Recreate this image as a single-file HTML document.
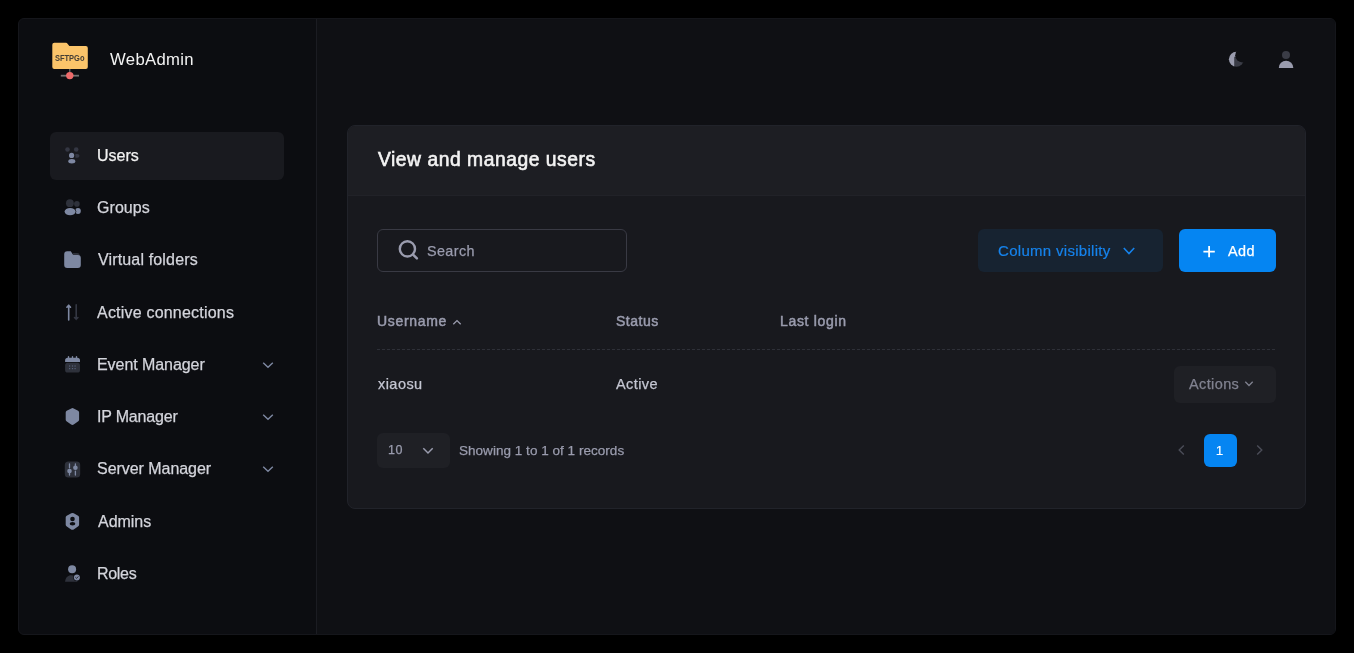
<!DOCTYPE html>
<html>
<head>
<meta charset="utf-8">
<style>
*{box-sizing:border-box;margin:0;padding:0}
html,body{width:1354px;height:653px;background:#000;overflow:hidden;font-family:"Liberation Sans",sans-serif;-webkit-font-smoothing:antialiased}
.a{will-change:transform}
.m{-webkit-text-stroke-width:0.25px}
.sb{-webkit-text-stroke-width:0.5px}
.a{position:absolute;white-space:nowrap;line-height:1}
.frame{position:absolute;left:18px;top:18px;width:1318px;height:617px;background:#0C0D11;border:1px solid #15161b;border-radius:6px;overflow:hidden}
.main{position:absolute;left:316px;top:19px;width:1019px;height:615px;background:#0F1014;border-left:1px solid #1B1C22;border-radius:0 5px 5px 0}
.menu-active{position:absolute;left:50px;top:132px;width:234px;height:48px;background:#191A1F;border-radius:6px}
.mi{font-size:16px;color:#D4D5DC;left:98px;-webkit-text-stroke:0.25px #D4D5DC}
.chev{position:absolute;left:262px;width:12px;height:8px}
.card{position:absolute;left:347px;top:125px;width:959px;height:384px;background:#18191E;border:1px solid #21232A;border-radius:8px;overflow:hidden}
.card-h{position:absolute;left:0;top:0;right:0;height:70px;background:#1D1E23;border-bottom:1px solid #212228}
svg{position:absolute;overflow:visible;will-change:transform}
</style>
</head>
<body>
<div class="frame"></div>
<div class="main"></div>

<!-- logo -->
<svg style="left:50px;top:40px" width="40" height="40" viewBox="0 0 40 40">
  <path d="M4.3 2.7 h11.8 a1.2 1.2 0 0 1 1 .5 l2.3 2.8 h16.4 a2 2 0 0 1 2 2 v19 a2 2 0 0 1 -2 2 h-31.5 a2 2 0 0 1 -2 -2 v-22.3 a2 2 0 0 1 2 -2z" fill="#FBC46A"/>
  <text x="19.7" y="21.1" font-family="Liberation Sans" font-weight="bold" font-size="8.9" fill="#463F35" text-anchor="middle" textLength="29.6" lengthAdjust="spacingAndGlyphs">SFTPGo</text>
  <rect x="19.2" y="29" width="1.2" height="4" fill="#707070"/>
  <rect x="10.8" y="34.8" width="18.2" height="1.8" fill="#707070"/>
  <circle cx="19.8" cy="35.6" r="3.7" fill="#EE6B6B"/>
</svg>
<div class="a" style="left:110px;top:51.6px;font-size:16.7px;letter-spacing:0.33px;color:#F3F3F3">WebAdmin</div>

<!-- menu -->
<div class="menu-active"></div>

<svg style="left:60px;top:144px" width="24" height="24" viewBox="0 0 24 24">
  <circle cx="7.5" cy="5.5" r="2.3" fill="#343743"/>
  <circle cx="16.2" cy="5.5" r="2.3" fill="#343743"/>
  <path d="M15.4 9.9 h1.9 a2.2 1.9 0 0 1 0 3.8 h-1.9z" fill="#343743"/>
  <circle cx="11.6" cy="11.4" r="2.6" fill="#7E88A2"/>
  <ellipse cx="11.8" cy="17.3" rx="3.5" ry="2.2" fill="#7E88A2"/>
</svg>
<div class="a mi" style="top:147.68px;left:97px;letter-spacing:-0.026px;color:#F3F3F3;-webkit-text-stroke:0.25px #F3F3F3">Users</div>

<svg style="left:60px;top:196px" width="24" height="24" viewBox="0 0 24 24">
  <circle cx="9.9" cy="7.2" r="3.9" fill="#2E313B"/>
  <circle cx="16.9" cy="7.9" r="2.8" fill="#2E313B"/>
  <ellipse cx="18" cy="14.9" rx="2.8" ry="3" fill="#7E88A2"/>
  <ellipse cx="10.1" cy="15.6" rx="6.2" ry="4.3" fill="#0C0D11"/>
  <ellipse cx="10.1" cy="15.6" rx="5.5" ry="3.7" fill="#7E88A2"/>
</svg>
<div class="a mi" style="top:199.58px;left:96.7px;letter-spacing:0.052px">Groups</div>

<svg style="left:60px;top:248px" width="24" height="24" viewBox="0 0 24 24">
  <path d="M13 5 h4.5 a2 2 0 0 1 2 2 v1 h-6.5z" fill="#2E313B"/>
  <path d="M7.2 3.3 h3.6 l2.4 3.6 h4.6 a3 3 0 0 1 3 3 v7 a3 3 0 0 1 -3 3 h-10.6 a3 3 0 0 1 -3 -3 v-10.6 a3 3 0 0 1 3 -3z" fill="#7E88A2"/>
</svg>
<div class="a mi" style="top:252.48px;letter-spacing:0.152px">Virtual folders</div>

<svg style="left:60px;top:300px" width="24" height="24" viewBox="0 0 24 24">
  <path d="M8.7 20 V5.3 M6.9 7.2 L8.7 5.2 L10.5 7.2" stroke="#7E88A2" stroke-width="1.6" fill="none" stroke-linecap="round" stroke-linejoin="round"/>
  <path d="M16.2 4.8 V19.2 M14.5 17.5 L16.2 19.3 L17.9 17.5" stroke="#343743" stroke-width="1.6" fill="none" stroke-linecap="round" stroke-linejoin="round"/>
</svg>
<div class="a mi" style="top:305.1px;left:97px;letter-spacing:0.205px">Active connections</div>

<svg style="left:60px;top:352px" width="24" height="24" viewBox="0 0 24 24">
  <rect x="5.1" y="10.8" width="14.9" height="9.8" rx="2.6" fill="#2E313B"/>
  <path d="M5.1 9.9 V8.6 a2.8 2.8 0 0 1 2.8 -2.8 h9.3 a2.8 2.8 0 0 1 2.8 2.8 V9.9z" fill="#7E88A2"/>
  <rect x="7.8" y="4" width="1.4" height="3" rx="0.7" fill="#7E88A2"/>
  <rect x="11.8" y="4" width="1.4" height="3" rx="0.7" fill="#7E88A2"/>
  <rect x="15.8" y="4" width="1.4" height="3" rx="0.7" fill="#7E88A2"/>
  <g fill="#56607a"><rect x="9" y="13.4" width="1.2" height="1.2"/><rect x="11.9" y="13.4" width="1.2" height="1.2"/><rect x="14.5" y="13.4" width="1.2" height="1.2"/><rect x="9" y="16" width="1.2" height="1.2"/><rect x="11.9" y="16" width="1.2" height="1.2"/><rect x="14.5" y="16" width="1.2" height="1.2"/></g>
</svg>
<div class="a mi" style="top:357.0px;left:96.6px;letter-spacing:-0.063px">Event Manager</div>
<svg class="chev" style="top:361px" width="12" height="8" viewBox="0 0 12 8"><path d="M1.2 1.8 L6 6.2 L10.8 1.8" stroke="#7E88A2" stroke-width="1.4" fill="none"/></svg>

<svg style="left:60px;top:404px" width="24" height="24" viewBox="0 0 24 24">
  <path d="M11.3 4.4 a2.4 2.4 0 0 1 2.4 0 l4.4 2.4 a1.8 1.8 0 0 1 1 1.6 v7.4 a1.8 1.8 0 0 1 -0.8 1.5 l-4.6 3.2 a2.4 2.4 0 0 1 -2.6 0 l-4.6 -3.2 a1.8 1.8 0 0 1 -0.8 -1.5 v-7.4 a1.8 1.8 0 0 1 1 -1.6z" fill="#7E88A2"/>
</svg>
<div class="a mi" style="top:408.58px;left:96.6px;letter-spacing:-0.186px">IP Manager</div>
<svg class="chev" style="top:413px" width="12" height="8" viewBox="0 0 12 8"><path d="M1.2 1.8 L6 6.2 L10.8 1.8" stroke="#7E88A2" stroke-width="1.4" fill="none"/></svg>

<svg style="left:60px;top:457px" width="24" height="24" viewBox="0 0 24 24">
  <rect x="4.8" y="4.4" width="15.4" height="16.2" rx="3.6" fill="#2E313B"/>
  <g stroke="#7E88A2" stroke-width="1.3" stroke-linecap="round"><path d="M9.5 6.8 V10.8 M9.5 15.8 V18 M15.4 6.8 V8.8 M15.4 14.2 V18"/></g>
  <circle cx="9.5" cy="14" r="2.3" fill="#7E88A2"/>
  <circle cx="15.4" cy="10.7" r="2.3" fill="#7E88A2"/>
</svg>
<div class="a mi" style="top:461.1px;left:96.8px;letter-spacing:-0.046px">Server Manager</div>
<svg class="chev" style="top:465px" width="12" height="8" viewBox="0 0 12 8"><path d="M1.2 1.8 L6 6.2 L10.8 1.8" stroke="#7E88A2" stroke-width="1.4" fill="none"/></svg>

<svg style="left:60px;top:510px" width="24" height="24" viewBox="0 0 24 24">
  <path d="M11.3 3.3 a2.4 2.4 0 0 1 2.4 0 l4.4 2.4 a1.8 1.8 0 0 1 1 1.6 v7.4 a1.8 1.8 0 0 1 -0.8 1.5 l-4.6 3.2 a2.4 2.4 0 0 1 -2.6 0 l-4.6 -3.2 a1.8 1.8 0 0 1 -0.8 -1.5 v-7.4 a1.8 1.8 0 0 1 1 -1.6z" fill="#7E88A2"/>
  <circle cx="12.5" cy="9" r="2.3" fill="#0C0D11"/>
  <ellipse cx="12.5" cy="13.8" rx="2.8" ry="1.7" fill="#0C0D11"/>
</svg>
<div class="a mi" style="top:514.38px;letter-spacing:-0.034px">Admins</div>

<svg style="left:60px;top:562px" width="24" height="24" viewBox="0 0 24 24">
  <path d="M5.1 19.7 C5.3 15.5 8 13.2 11.2 13.2 C13.8 13.2 16 14.2 17.3 16 L17.3 19.7z" fill="#2E313B"/>
  <circle cx="12.1" cy="7.2" r="4" fill="#7E88A2"/>
  <circle cx="16.9" cy="15.4" r="3.6" fill="#0C0D11"/>
  <circle cx="16.9" cy="15.4" r="3" fill="#7E88A2"/>
  <path d="M15.4 15.3 L16.6 16.4 L18.4 14.4" stroke="#2E313B" stroke-width="1" fill="none"/>
</svg>
<div class="a mi" style="top:566.48px;left:96.8px;letter-spacing:-0.320px">Roles</div>

<!-- header icons -->
<svg style="left:1224px;top:47px" width="24" height="24" viewBox="0 0 24 24">
  <defs><mask id="moon"><circle cx="12.4" cy="12.2" r="7.5" fill="#fff"/><circle cx="18.4" cy="8.2" r="7.2" fill="#000"/></mask></defs>
  <g mask="url(#moon)"><rect x="0" y="0" width="24" height="24" fill="#3A3C46"/><path d="M0 0 H24 V9.8 H10.2 V24 H0z" fill="#9A9CAE"/></g>
</svg>
<svg style="left:1274px;top:47px" width="24" height="24" viewBox="0 0 24 24">
  <circle cx="12" cy="8.1" r="4" fill="#3A3C46"/>
  <path d="M4.8 21 A7.2 7.2 0 0 1 19.3 21z" fill="#9A9CAE"/>
</svg>

<!-- card -->
<div class="card"><div class="card-h"></div></div>
<div class="a" style="left:378px;top:150px;font-size:19.3px;letter-spacing:0.53px;color:#F3F3F3;-webkit-text-stroke:0.6px #F3F3F3">View and manage users</div>

<div class="a" style="left:377px;top:229px;width:250px;height:43px;border:1px solid #393A44;border-radius:6px"></div>
<svg style="left:396px;top:237px" width="24" height="24" viewBox="0 0 24 24">
  <circle cx="11.4" cy="11.9" r="7.6" stroke="#9A9CAE" stroke-width="2.4" fill="none"/>
  <path d="M17.3 17.8 L20.9 21.4" stroke="#9A9CAE" stroke-width="2.5" stroke-linecap="round"/>
</svg>
<div class="a m" style="left:427.4px;top:243.9px;font-size:14.4px;letter-spacing:0.38px;color:#9A9CAE">Search</div>

<div class="a" style="left:978px;top:229px;width:185px;height:43px;background:#172331;border-radius:6px"></div>
<div class="a" style="left:997.7px;top:243.0px;font-size:15px;letter-spacing:0.3px;color:#1683EC;-webkit-text-stroke-width:0.2px">Column visibility</div>
<svg style="left:1122px;top:246px" width="14" height="10" viewBox="0 0 14 10"><path d="M1.8 2 L7 7.6 L12.2 2" stroke="#1683EC" stroke-width="1.6" fill="none"/></svg>

<div class="a" style="left:1179px;top:229px;width:97px;height:43px;background:#0585F2;border-radius:6px"></div>
<svg style="left:1202px;top:244px" width="14" height="14" viewBox="0 0 14 14"><path d="M7.1 2 V13.2 M1.4 7.6 H12.8" stroke="#fff" stroke-width="1.8"/></svg>
<div class="a m" style="left:1228px;top:243.9px;font-size:14.4px;letter-spacing:0.5px;color:#FFFFFF">Add</div>

<!-- table -->
<div class="a sb" style="left:376.7px;top:314px;font-size:14px;letter-spacing:0.69px;color:#9A9CAE">Username</div>
<svg style="left:451px;top:317px" width="12" height="10" viewBox="0 0 12 10"><path d="M2.3 7.3 L6 3.6 L9.7 7.3" stroke="#9A9CAE" stroke-width="1.3" fill="none"/></svg>
<div class="a sb" style="left:615.5px;top:313.6px;font-size:14px;letter-spacing:0.5px;color:#9A9CAE">Status</div>
<div class="a sb" style="left:780px;top:314px;font-size:14px;letter-spacing:0.67px;color:#9A9CAE">Last login</div>
<div class="a" style="left:377px;top:349px;width:899px;height:1px;background-image:linear-gradient(to right,#2E3038 60%,transparent 60%);background-size:5px 1px"></div>

<div class="a m" style="left:377.5px;top:376.8px;font-size:14.5px;letter-spacing:0.45px;color:#C4C6D2">xiaosu</div>
<div class="a m" style="left:615.5px;top:376.8px;font-size:14.5px;letter-spacing:0.4px;color:#C4C6D2">Active</div>
<div class="a" style="left:1174px;top:366px;width:102px;height:37px;background:#1F2025;border-radius:6px"></div>
<div class="a m" style="left:1189px;top:377px;font-size:14.5px;letter-spacing:0.38px;color:#808290">Actions</div>
<svg style="left:1243px;top:379px" width="12" height="10" viewBox="0 0 12 10"><path d="M2.3 2.8 L6 6.5 L9.7 2.8" stroke="#808290" stroke-width="1.3" fill="none"/></svg>

<div class="a" style="left:377px;top:433px;width:73px;height:35px;background:#1F2025;border-radius:6px"></div>
<div class="a m" style="left:387.5px;top:443.5px;font-size:12.5px;letter-spacing:0.6px;color:#9A9CAE">10</div>
<svg style="left:421px;top:445px" width="14" height="10" viewBox="0 0 14 10"><path d="M2.3 3.3 L7 8 L11.7 3.3" stroke="#9A9CAE" stroke-width="1.5" fill="none"/></svg>
<div class="a m" style="left:459.3px;top:443.7px;font-size:13.5px;letter-spacing:0.03px;color:#9A9CAE">Showing 1 to 1 of 1 records</div>

<svg style="left:1175px;top:444px" width="12" height="12" viewBox="0 0 12 12"><path d="M8.8 1.5 L4.2 6 L8.8 10.5" stroke="#4B4D58" stroke-width="1.4" fill="none"/></svg>
<div class="a" style="left:1204px;top:434px;width:33px;height:33px;background:#0585F2;border-radius:6px"></div>
<div class="a" style="left:1203px;top:444.2px;width:33px;text-align:center;font-size:13.7px;color:#fff;-webkit-text-stroke-width:0.1px">1</div>
<svg style="left:1254px;top:444px" width="12" height="12" viewBox="0 0 12 12"><path d="M3.2 1.5 L7.8 6 L3.2 10.5" stroke="#4B4D58" stroke-width="1.4" fill="none"/></svg>

</body>
</html>
